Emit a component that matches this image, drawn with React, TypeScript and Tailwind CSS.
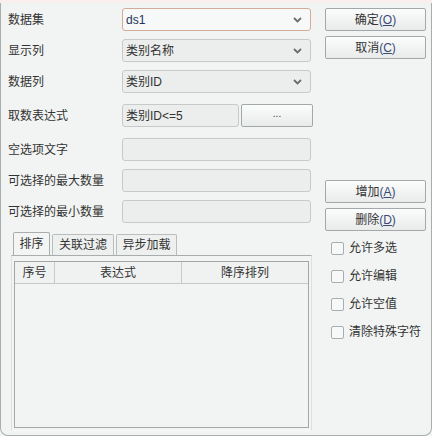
import React from "react";

const font = { fontFamily: '"Liberation Sans", "Noto Sans CJK SC", sans-serif' };

function Chevron() {
  return (
    <svg width="9" height="6" viewBox="0 0 9 6" className="shrink-0">
      <path d="M1 1 L4.5 4.5 L8 1" stroke="#6a6e70" strokeWidth="1.8" fill="none" />
    </svg>
  );
}

function Select({ value, focused }: { value: string; focused?: boolean }) {
  return (
    <div
      className={
        "w-[189px] h-[23px] rounded-[3px] border flex items-center pl-[3px] pr-[8px] justify-between " +
        (focused ? "border-[#d3ab98] bg-[#f7f8f8] text-[#26345a]" : "border-[#c6caca] bg-[#eceeed] text-[#333]")
      }
    >
      <span className="text-[12px] leading-none">{value}</span>
      <Chevron />
    </div>
  );
}

function Input({ value, w = "w-[189px]" }: { value?: string; w?: string }) {
  return (
    <div className={w + " h-[23px] rounded-[3px] border border-[#c6caca] bg-[#eceeed] flex items-center pl-[3px] text-[12px] text-[#333]"}>
      {value}
    </div>
  );
}

function Btn({ label, k }: { label: string; k: string }) {
  return (
    <div className="w-[101px] h-[23px] rounded-[2px] border border-[#a3a8ab] bg-gradient-to-b from-[#fbfcfc] to-[#e9ebeb] flex items-center justify-center text-[12px] text-[#333]">
      {label}
      <span className="text-[#3a4a78]">
        (<span className="underline">{k}</span>)
      </span>
    </div>
  );
}

function Label({ children }: { children: React.ReactNode }) {
  return <div className="w-[114px] text-[12px] text-[#333] leading-none">{children}</div>;
}

function Check({ label }: { label: string }) {
  return (
    <div className="flex items-center gap-[5px] h-[14px]">
      <div className="w-[13px] h-[13px] rounded-[2px] border border-[#a7adb1] bg-[#f7f8f8]" />
      <span className="text-[12px] text-[#333] leading-none">{label}</span>
    </div>
  );
}

export default function App() {
  return (
    <div style={font} className="w-[432px] h-[436px] bg-[#f2f4f3] relative overflow-hidden">
      <div className="h-[3px] bg-[#f8eeee]" />
      <div className="h-[433px] border-l border-r border-b border-[#a9adad] rounded-b-[8px] flex">
        {/* Left column */}
        <div className="w-[316px] pl-[7px] pt-[5px] flex flex-col">
          <div className="flex items-center h-[23px]">
            <Label>数据集</Label>
            <Select value="ds1" focused />
          </div>
          <div className="flex items-center h-[23px] mt-[8px]">
            <Label>显示列</Label>
            <Select value="类别名称" />
          </div>
          <div className="flex items-center h-[23px] mt-[8px]">
            <Label>数据列</Label>
            <Select value="类别ID" />
          </div>
          <div className="flex items-center h-[23px] mt-[11px]">
            <Label>取数表达式</Label>
            <Input value="类别ID<=5" w="w-[117px]" />
            <div className="ml-[2px] w-[72px] h-[23px] rounded-[2px] border border-[#a3a8ab] bg-gradient-to-b from-[#fbfcfc] to-[#e9ebeb] flex items-center justify-center text-[10px] text-[#333] leading-none pb-[3px]">
              ...
            </div>
          </div>
          <div className="flex items-center h-[23px] mt-[11px]">
            <Label>空选项文字</Label>
            <Input />
          </div>
          <div className="flex items-center h-[23px] mt-[8px]">
            <Label>可选择的最大数量</Label>
            <Input />
          </div>
          <div className="flex items-center h-[23px] mt-[8px]">
            <Label>可选择的最小数量</Label>
            <Input />
          </div>

          {/* Tabs */}
          <div className="mt-[10px] ml-[3px] w-[301px]">
            <div className="flex items-end h-[22px] pl-[2px] gap-[2px]">
              <div className="h-[23px] w-[37px] border border-b-0 border-[#a9adad] bg-[#f3f5f4] rounded-t-[2px] flex items-center justify-center text-[12px] text-[#333] relative z-10">
                排序
              </div>
              <div className="h-[21px] w-[62px] border border-b-0 border-[#b9bdbd] bg-[#eef0ef] rounded-t-[2px] flex items-center justify-center text-[12px] text-[#333]">
                关联过滤
              </div>
              <div className="h-[21px] w-[61px] border border-b-0 border-[#b9bdbd] bg-[#eef0ef] rounded-t-[2px] flex items-center justify-center text-[12px] text-[#333]">
                异步加载
              </div>
            </div>
            <div className="h-[176px] border-t border-[#a9adad] border-l border-l-[#dde0df] border-r border-r-[#dde0df] border-b border-b-[#f8f9f9] pt-[5px] pl-[2px] pr-[2px]">
              <div className="w-[295px] h-[167px] border border-[#a3a7aa] flex flex-col">
                <div className="h-[22px] flex border-b border-[#c6caca] bg-[#f0f2f1] text-[12px] text-[#333]">
                  <div className="w-[40px] border-r border-[#c6caca] flex items-center justify-center">序号</div>
                  <div className="w-[127px] border-r border-[#c6caca] flex items-center justify-center">表达式</div>
                  <div className="flex-1 flex items-center justify-center">降序排列</div>
                </div>
              </div>
            </div>
          </div>
        </div>

        {/* Right column */}
        <div className="flex-1 pt-[5px] pl-[8px] flex flex-col">
          <Btn label="确定" k="O" />
          <div className="mt-[5px]"><Btn label="取消" k="C" /></div>
          <div className="mt-[121px]"><Btn label="增加" k="A" /></div>
          <div className="mt-[5px]"><Btn label="删除" k="D" /></div>
          <div className="mt-[10px] pl-[6px] flex flex-col gap-[14px]">
            <Check label="允许多选" />
            <Check label="允许编辑" />
            <Check label="允许空值" />
            <Check label="清除特殊字符" />
          </div>
        </div>
      </div>
    </div>
  );
}
